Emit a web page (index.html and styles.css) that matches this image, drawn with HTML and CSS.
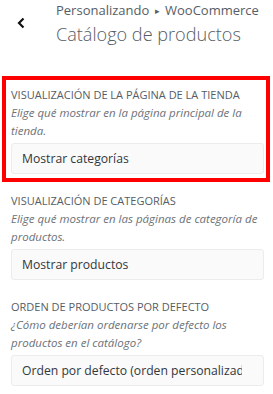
FILE: index.html
```html
<!DOCTYPE html>
<html lang="es">
<head>
  <meta charset="UTF-8" />
  <meta name="viewport" content="width=device-width, initial-scale=1">
  <title>Catálogo de productos</title>
  <link rel="stylesheet" href="styles.css">
</head>
<body>

  <div class="header">
    <button class="back" aria-label="Volver">
      <svg width="8" height="12" viewBox="0 0 8 12">
        <path d="M6.5 1.5 L2 6 L6.5 10.5" fill="none" stroke="#111" stroke-width="2.2"/>
      </svg>
    </button>
    <div class="titles">
      <div class="crumb">Personalizando <span class="sep">&#9656;</span> WooCommerce</div>
      <h1>Catálogo de productos</h1>
    </div>
  </div>

  <div class="panel">
    <div class="section highlight">
      <div class="label">Visualización de la página de la tienda</div>
      <p class="desc">Elige qué mostrar en la página principal de la tienda.</p>
      <div class="select"><span>Mostrar categorías</span></div>
    </div>

    <div class="section">
      <div class="label">Visualización de categorías</div>
      <p class="desc">Elige qué mostrar en las páginas de categoría de productos.</p>
      <div class="select"><span>Mostrar productos</span></div>
    </div>

    <div class="section">
      <div class="label">Orden de productos por defecto</div>
      <p class="desc">¿Cómo deberían ordenarse por defecto los productos en el catálogo?</p>
      <div class="select"><span>Orden por defecto (orden personalizado + nombre)</span></div>
    </div>
  </div>

</body>
</html>
```

FILE: styles.css
```css
* {
  box-sizing: border-box;
  margin: 0;
  padding: 0;
}

body {
  font-family: "Open Sans", "Noto Sans", sans-serif;
  background: #fff;
  color: #32373c;
  width: 273px;
  overflow: hidden;
}

.header {
  display: flex;
  height: 76px;
  padding-top: 1px;
}

.back {
  width: 56px;
  height: 44px;
  border: none;
  background: none;
  display: flex;
  align-items: center;
  padding-left: 17px;
}

.titles {
  color: #555d66;
}

.crumb {
  font-size: 13px;
  line-height: 18px;
}

.crumb .sep {
  font-size: 9px;
  position: relative;
  top: -1px;
  margin: 0 2px;
}

h1 {
  font-size: 18.1px;
  font-weight: 300;
  line-height: 26px;
}

.section {
  height: 106px;
  margin: 0 3px 0 2px;
  border: 4px solid transparent;
  padding: 7px 2px 0 5px;
}

.section.highlight {
  border-color: #f00;
}

.label {
  font-size: 11px;
  line-height: 16px;
  text-transform: uppercase;
  color: #555d66;
}

.desc {
  font-size: 11.5px;
  font-style: italic;
  line-height: 18px;
  color: #6c7278;
  height: 40px;
  padding-top: 1px;
}

.select {
  height: 31px;
  border: 1px solid #ececec;
  border-radius: 3px;
  background: #fafafa;
  font-size: 12.2px;
  line-height: 29px;
  padding: 0 21px 0 10px;
}

.select span {
  display: block;
  white-space: nowrap;
  overflow: hidden;
}
```
